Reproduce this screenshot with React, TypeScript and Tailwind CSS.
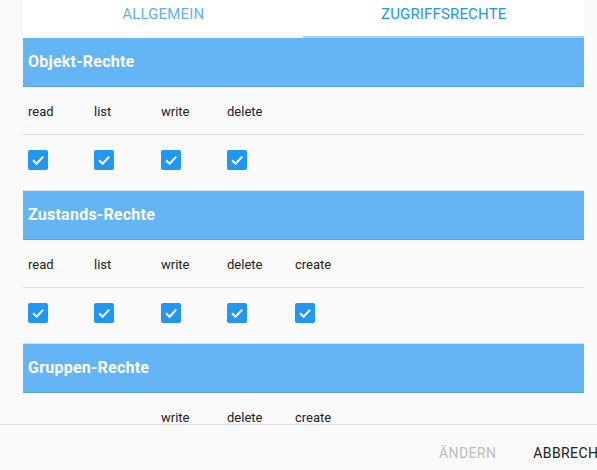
import React from "react";

const Check = () => (
  <div className="w-[20px] h-[20px] rounded-[2px] bg-[#2196f3] flex items-center justify-center">
    <svg width="20" height="20" viewBox="0 0 20 20">
      <polyline points="5,10.2 8.6,13.8 15.2,6.6" fill="none" stroke="white" strokeWidth="2" />
    </svg>
  </div>
);

const cols = ["read", "list", "write", "delete", "create"];

function Section({
  title,
  labels,
  checks,
}: {
  title: string;
  labels: (string | null)[];
  checks?: boolean[];
}) {
  return (
    <div>
      <div className="h-[49px] bg-[#64b5f6] border-b border-[#5aa2de] flex items-center pl-[5px]">
        <span className="text-white font-bold text-[16px] tracking-[0.015em]">{title}</span>
      </div>
      <div className="h-[48px] border-b border-[#e0e0e0] grid grid-cols-[66px_67px_66px_68px_66px] pl-[5px] pt-[2px] items-center text-[13px] text-[#212121]">
        {labels.map((l, i) => (
          <div key={i}>{l ?? ""}</div>
        ))}
      </div>
      {checks && (
        <div className="h-[56px] border-b border-[#e0e0e0] grid grid-cols-[66px_67px_66px_68px_66px] pl-[5px] items-start pt-[15px]">
          {checks.map((c, i) => (
            <div key={i}>{c ? <Check /> : null}</div>
          ))}
        </div>
      )}
    </div>
  );
}

export default function App() {
  return (
    <div
      className="w-full h-[470px] bg-[#fafafa] flex flex-col overflow-hidden"
      style={{ fontFamily: "Roboto, 'Liberation Sans', sans-serif" }}
    >
      <div className="h-[424px] overflow-hidden">
        <div className="ml-[23px] w-[561px]">
          <div className="relative h-[48px] -mt-[10px] bg-white grid grid-cols-2 text-[15px] tracking-[0.01em] uppercase">
            <div className="flex items-center justify-center text-[#64b0f0]">Allgemein</div>
            <div className="flex items-center justify-center text-[#2196f3]">Zugriffsrechte</div>
            <div className="absolute bottom-0 left-[280px] right-0 h-[2px] bg-[#9fd0f7]" />
          </div>
          <Section title="Objekt-Rechte" labels={cols.slice(0, 4)} checks={[true, true, true, true]} />
          <Section title="Zustands-Rechte" labels={cols} checks={[true, true, true, true, true]} />
          <Section title="Gruppen-Rechte" labels={[null, null, "write", "delete", "create"]} checks={[true, true, true, true, true]} />
        </div>
      </div>
      <div className="flex-1 border-t border-[#e0e0e0] overflow-hidden">
        <div className="flex items-center h-full pt-[12px] pl-[431px] gap-[21px] text-[14px] tracking-[0.02857em] uppercase whitespace-nowrap">
          <div className="px-2 text-[#bdbdbd]">Ändern</div>
          <div className="px-2 text-[#212121]">Abbrechen</div>
        </div>
      </div>
    </div>
  );
}
